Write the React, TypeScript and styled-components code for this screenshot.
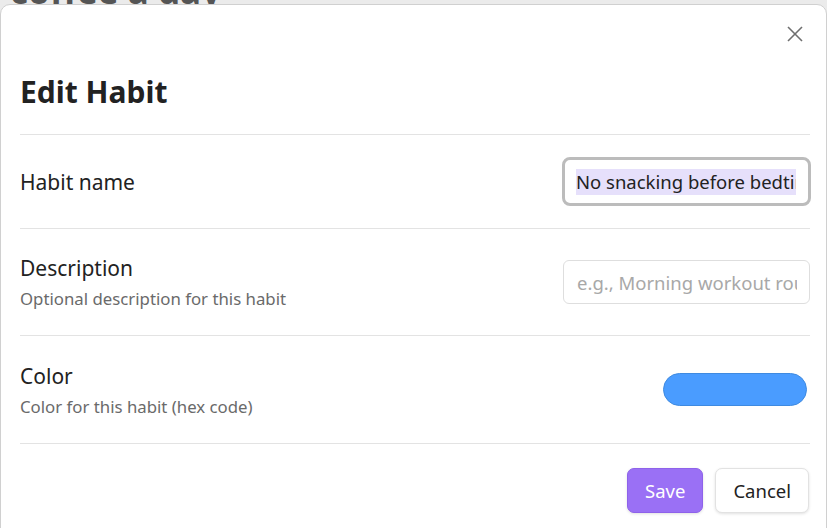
import * as React from 'react';
import styled, { createGlobalStyle } from 'styled-components';

const GlobalStyle = createGlobalStyle`
  html, body {
    margin: 0;
    padding: 0;
    height: 100%;
    overflow: hidden;
    background: #ebebeb;
    font-family: 'Noto Sans', 'Open Sans', sans-serif;
  }
`;

const Backdrop = styled.div`
  height: 528px;
  position: relative;
  background: #ebebeb;
`;

const BehindTitle = styled.div`
  height: 5px;
  overflow: hidden;
  padding-left: 10px;

  > span {
    display: block;
    margin-top: -27px;
    font-size: 35px;
    line-height: 35px;
    font-weight: 700;
    color: #555;
  }
`;

const Modal = styled.div`
  position: absolute;
  top: 4px;
  left: 0;
  width: 827px;
  bottom: -20px;
  background: #ffffff;
  border: 1px solid #d0d0d0;
  border-radius: 10px;
  box-sizing: border-box;
  padding: 0 16px 0 19px;
`;

const CloseButton = styled.button`
  position: absolute;
  top: 18px;
  right: 20px;
  width: 22px;
  height: 22px;
  padding: 0;
  border: none;
  background: none;
  display: flex;
  align-items: center;
  justify-content: center;
`;

const Title = styled.h1`
  margin: 0;
  padding: 67px 0 22px 0;
  font-size: 30px;
  line-height: 40px;
  font-weight: 700;
  color: #222;
  border-bottom: 1px solid #e3e3e3;
`;

const Row = styled.div<{ $height: number }>`
  height: ${(p) => p.$height}px;
  display: flex;
  align-items: center;
  justify-content: space-between;
  border-bottom: 1px solid #e3e3e3;
  box-sizing: border-box;
`;

const Info = styled.div`
  display: flex;
  flex-direction: column;
  gap: 6px;
`;

const Name = styled.div`
  font-size: 21px;
  line-height: 28px;
  color: #222;
`;

const Hint = styled.div`
  font-size: 16.8px;
  line-height: 22px;
  color: #6a6a6a;
`;

const TextInput = styled.div<{ $focused?: boolean }>`
  width: ${(p) => (p.$focused ? 249 : 247)}px;
  height: ${(p) => (p.$focused ? 49 : 44)}px;
  box-sizing: border-box;
  border: ${(p) => (p.$focused ? '3px solid #bcbcbc' : '1px solid #dedede')};
  border-radius: ${(p) => (p.$focused ? 8 : 6)}px;
  padding: ${(p) => (p.$focused ? '0 12px 0 11px' : '0 12px 0 13px')};
  display: flex;
  align-items: center;
  font-size: 18.5px;
  color: #222;
  margin-right: ${(p) => (p.$focused ? -1 : 0)}px;
`;

const Clip = styled.div`
  flex: 1;
  overflow: hidden;
  white-space: nowrap;
`;

const Selected = styled.span`
  background: #e6e0fb;
  line-height: 26px;
  display: inline-block;
`;

const Placeholder = styled.span`
  color: #a8a8a8;
`;

const Swatch = styled.div<{ $color: string }>`
  width: 144px;
  height: 33px;
  border-radius: 17px;
  background: ${(p) => p.$color};
  border: 1px solid #3f8ae0;
  box-sizing: border-box;
  margin-right: 3px;
`;

const Footer = styled.div`
  display: flex;
  justify-content: flex-end;
  gap: 12px;
  padding: 24px 1px 0 0;
`;

const Button = styled.button<{ $primary?: boolean }>`
  height: 45px;
  box-sizing: border-box;
  padding: 0 17px;
  border-radius: 7px;
  font-family: inherit;
  font-size: 18.5px;
  border: ${(p) => (p.$primary ? '1px solid #8e62ea' : '1px solid #e2e2e2')};
  background: ${(p) => (p.$primary ? '#9a70f5' : '#ffffff')};
  color: ${(p) => (p.$primary ? '#ffffff' : '#222')};
  box-shadow: 0 1px 3px rgba(0, 0, 0, 0.12);
`;

export default function App() {
  return (
    <Backdrop>
      <GlobalStyle />
      <BehindTitle>
        <span>coffee a day</span>
      </BehindTitle>
      <Modal>
        <CloseButton aria-label="Close">
          <svg width="18" height="18" viewBox="0 0 18 18" fill="none">
            <line x1="2" y1="2" x2="16" y2="16" stroke="#6f6f6f" strokeWidth="1.6" />
            <line x1="16" y1="2" x2="2" y2="16" stroke="#6f6f6f" strokeWidth="1.6" />
          </svg>
        </CloseButton>
        <Title>Edit Habit</Title>
        <Row $height={94}>
          <Info>
            <Name>Habit name</Name>
          </Info>
          <TextInput $focused>
            <Clip>
              <Selected>No snacking before bedtime</Selected>
            </Clip>
          </TextInput>
        </Row>
        <Row $height={107}>
          <Info>
            <Name>Description</Name>
            <Hint>Optional description for this habit</Hint>
          </Info>
          <TextInput>
            <Clip>
              <Placeholder>e.g., Morning workout routine</Placeholder>
            </Clip>
          </TextInput>
        </Row>
        <Row $height={108}>
          <Info>
            <Name>Color</Name>
            <Hint>Color for this habit (hex code)</Hint>
          </Info>
          <Swatch $color="#4a9cff" />
        </Row>
        <Footer>
          <Button $primary>Save</Button>
          <Button>Cancel</Button>
        </Footer>
      </Modal>
    </Backdrop>
  );
}
